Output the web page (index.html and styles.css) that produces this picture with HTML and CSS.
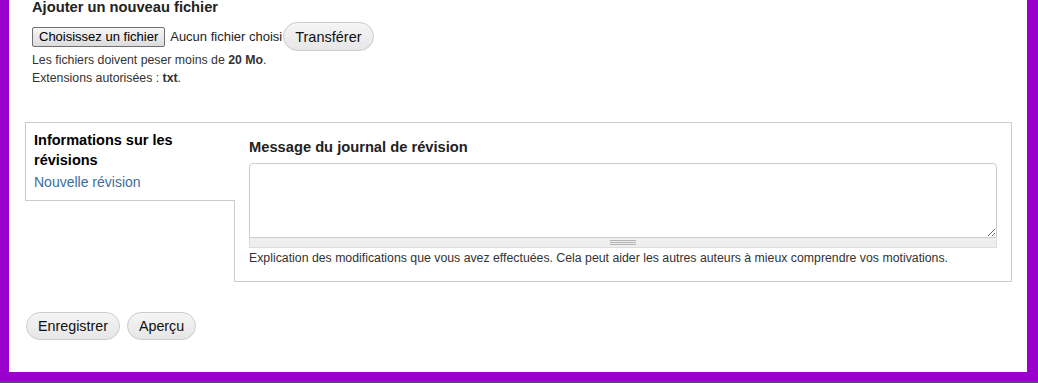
FILE: index.html
```html
<!DOCTYPE html>
<html lang="fr">
<head>
    <meta charset="UTF-8">
    <meta name="viewport" content="width=device-width, initial-scale=1.0">
    <title>Nouvelle révision</title>
    <link rel="stylesheet" href="styles.css">
</head>
<body>

    <div class="frame">

        <!-- Upload -->
        <div class="upload">
            <h3 class="label">Ajouter un nouveau fichier</h3>
            <div class="upload-row">
                <span class="file-btn">Choisissez un fichier</span>
                <span class="file-name">Aucun fichier choisi</span>
                <button class="btn">Transférer</button>
            </div>
            <div class="help">
                <p>Les fichiers doivent peser moins de <strong>20 Mo</strong>.</p>
                <p>Extensions autorisées : <strong>txt</strong>.</p>
            </div>
        </div>

        <!-- Vertical tabs -->
        <div class="vtabs">
            <div class="vtabs-list">
                <strong class="vtab-title">Informations sur les révisions</strong>
                <span class="vtab-summary">Nouvelle révision</span>
            </div>
            <div class="vtabs-pane">
                <label class="label" for="log">Message du journal de révision</label>
                <textarea id="log" class="log"></textarea>
                <div class="grippie"></div>
                <p class="description">Explication des modifications que vous avez effectuées. Cela peut aider les autres auteurs à mieux comprendre vos motivations.</p>
            </div>
        </div>

        <!-- Actions -->
        <div class="actions">
            <button class="btn btn-big">Enregistrer</button>
            <button class="btn btn-big">Aperçu</button>
        </div>

    </div>

</body>
</html>
```

FILE: styles.css
```css
html, body {
    margin: 0;
    height: 383px;
    overflow: hidden;
    background-color: #44545c;
}

body {
    font-family: "Liberation Sans", Arial, sans-serif;
    color: #333;
}

/* page scrolled a bit, top of the heading is cut */
.frame {
    margin-top: -3px;
    background: #fff;
    border-left: 9px solid #9900cc;
    border-right: 11px solid #9900cc;
    border-bottom: 9px solid #9900cc;
    padding: 0 15px 32px 16px;
}

.label {
    display: block;
    margin: 0;
    font-size: 14.7px;
    line-height: 20px;
    font-weight: bold;
    color: #222;
}

/* Upload */
.upload {
    padding-left: 7px;
}

.upload-row {
    display: flex;
    align-items: center;
    margin-top: 5px;
}

.file-btn {
    box-sizing: border-box;
    height: 20px;
    padding: 0 6px;
    border: 1px solid #707070;
    border-radius: 2px;
    background: linear-gradient(#f6f6f6, #dcdcdc);
    font-size: 13px;
    line-height: 18px;
    color: #000;
}

.file-name {
    margin-left: 5px;
    font-size: 13px;
    color: #222;
}

.btn {
    box-sizing: border-box;
    height: 29px;
    padding: 0 11px;
    border: 1px solid #ccc;
    border-radius: 15px;
    background: linear-gradient(#f5f5f5, #e6e6e6);
    font-family: inherit;
    font-size: 14.5px;
    color: #111;
    cursor: pointer;
}

.upload-row .btn {
    margin-left: 1px;
}

.help p {
    margin: 0;
    font-size: 12.3px;
    line-height: 18px;
    color: #333;
}

/* Vertical tabs */
.vtabs {
    display: flex;
    align-items: flex-start;
    margin-top: 35px;
}

.vtabs-list {
    position: relative;
    z-index: 1;
    box-sizing: border-box;
    width: 210px;
    margin-right: -1px;
    padding: 7px 8px 8px 8px;
    border: 1px solid #ccc;
    border-right: 0;
    background: #fff;
}

.vtab-title {
    display: block;
    font-size: 14.5px;
    line-height: 20px;
    color: #000;
}

.vtab-summary {
    display: block;
    margin-top: 2px;
    font-size: 14px;
    line-height: 20px;
    color: #3e6d9c;
}

.vtabs-pane {
    flex: 1;
    padding: 14px 14px 14px 14px;
    border: 1px solid #ccc;
}

.log {
    display: block;
    box-sizing: border-box;
    width: 100%;
    height: 75px;
    margin-top: 6px;
    border: 1px solid #ccc;
    border-radius: 4px 4px 0 0;
    font-family: inherit;
    outline: none;
}

.grippie {
    display: flex;
    justify-content: center;
    align-items: center;
    box-sizing: border-box;
    height: 10px;
    background: #eee;
    border: 1px solid #ddd;
    border-top: 0;
}

.grippie::after {
    content: "";
    width: 26px;
    height: 5px;
    background: repeating-linear-gradient(#b4b4b4 0 1px, transparent 1px 2px);
}

.description {
    margin: 1px 0 0;
    font-size: 12.3px;
    line-height: 18px;
    color: #333;
}

/* Actions */
.actions {
    display: flex;
    gap: 7px;
    margin-top: 30px;
    padding-left: 1px;
}

.btn-big {
    height: 28px;
    padding: 0 11px;
    font-size: 14.3px;
}
```
